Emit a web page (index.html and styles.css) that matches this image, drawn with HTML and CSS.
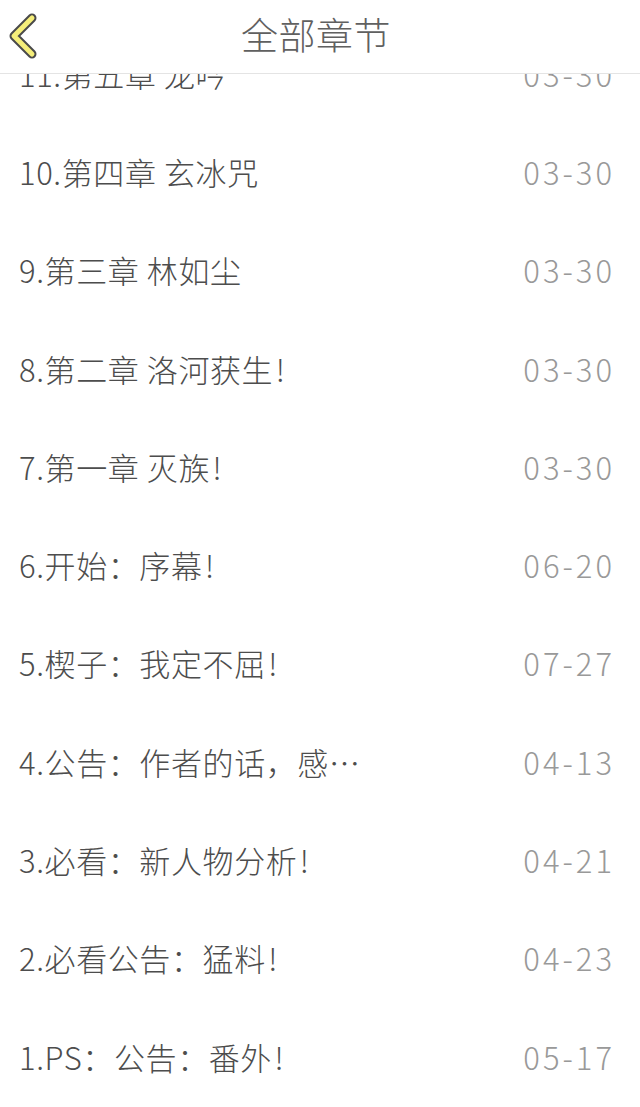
FILE: index.html
```html
<!DOCTYPE html>
<html lang="zh-CN">
<head>
  <meta charset="UTF-8">
  <title>全部章节</title>
  <link rel="stylesheet" href="styles.css">
</head>
<body>
  <!-- Top bar stays over the scrolled list -->
  <header class="top-bar">
    <a class="back-btn" href="#">
      <svg width="44" height="70" viewBox="0 0 44 70">
        <path d="M32 17 L14 35 L32 53" fill="none" stroke="#4a4a4a" stroke-width="9" stroke-linecap="round" stroke-linejoin="round"/>
        <path d="M32 17 L14 35 L32 53" fill="none" stroke="#f5ee7a" stroke-width="5" stroke-linecap="round" stroke-linejoin="round"/>
      </svg>
    </a>
    <h1 class="top-title">全部章节</h1>
  </header>

  <ul class="chapter-list">
    <li class="chapter"><span class="chapter-name">11.第五章 龙吟</span><span class="chapter-date">03-30</span></li>
    <li class="chapter"><span class="chapter-name">10.第四章 玄冰咒</span><span class="chapter-date">03-30</span></li>
    <li class="chapter"><span class="chapter-name">9.第三章 林如尘</span><span class="chapter-date">03-30</span></li>
    <li class="chapter"><span class="chapter-name">8.第二章 洛河获生&#8202;!</span><span class="chapter-date">03-30</span></li>
    <li class="chapter"><span class="chapter-name">7.第一章 灭族&#8202;!</span><span class="chapter-date">03-30</span></li>
    <li class="chapter"><span class="chapter-name">6.开始：序幕&#8202;!</span><span class="chapter-date">06-20</span></li>
    <li class="chapter"><span class="chapter-name">5.楔子：我定不屈&#8202;!</span><span class="chapter-date">07-27</span></li>
    <li class="chapter"><span class="chapter-name">4.公告：作者的话，感…</span><span class="chapter-date">04-13</span></li>
    <li class="chapter"><span class="chapter-name">3.必看：新人物分析&#8202;!</span><span class="chapter-date">04-21</span></li>
    <li class="chapter"><span class="chapter-name">2.必看公告：猛料&#8202;!</span><span class="chapter-date">04-23</span></li>
    <li class="chapter"><span class="chapter-name">1.PS：公告：番外&#8202;!</span><span class="chapter-date">05-17</span></li>
  </ul>
</body>
</html>
```

FILE: styles.css
```css
/* Page base */
body {
  margin: 0;
  background: #fff;
  font-family: "Noto Sans CJK SC", "Noto Sans", sans-serif;
  overflow: hidden;
}

/* Header bar */
.top-bar {
  position: fixed;
  top: 0;
  left: 0;
  right: 0;
  height: 73px;
  background: #fff;
  border-bottom: 1px solid #e4e4e4;
  display: flex;
  align-items: center;
  justify-content: center;
  z-index: 2;
}

.back-btn {
  position: absolute;
  left: 0;
  top: 1px;
  display: flex;
}

.top-title {
  margin: 0 8px 6px 0;
  font-size: 37px;
  font-weight: 300;
  color: #606060;
  letter-spacing: 0.5px;
}

/* Chapter list */
.chapter-list {
  list-style: none;
  margin: 0;
  padding: 24px 0 0;
}

.chapter {
  height: 98.3px;
  display: flex;
  align-items: center;
  justify-content: space-between;
  padding: 0 25px 0 19px;
  font-size: 31px;
  font-weight: 300;
}

.chapter-name {
  color: #4d4d4d;
  letter-spacing: 0.6px;
}

.chapter-date {
  color: #999;
  letter-spacing: 3px;
}
```
